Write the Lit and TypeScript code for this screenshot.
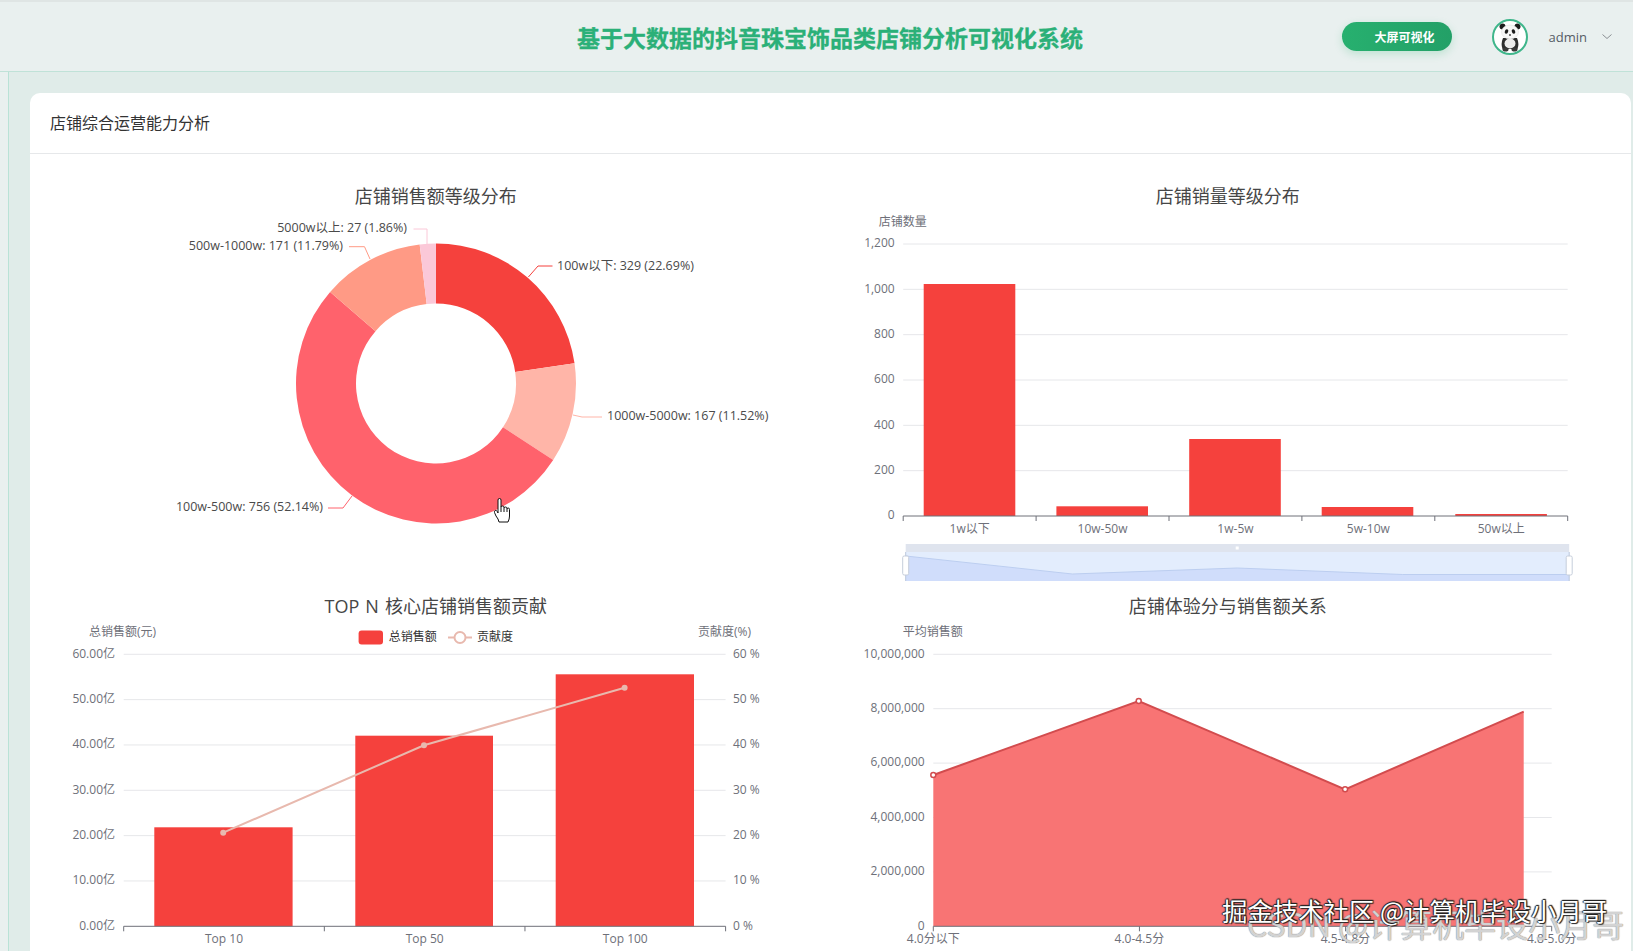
import { LitElement, css, html, svg } from "lit";
import { customElement } from "lit/decorators.js";

const RED = "#f5413d";

// 环形图: 顺时针从 12 点开始
const pieCx = 436;
const pieCy = 383.5;
const pieR = 140;
const pier = 80;
const pieData = [
  { pct: 22.69, color: "#f5413d", line: "528.4,277 538,266 552.5,266", text: "100w以下: 329 (22.69%)", x: 557, y: 266, anchor: "start" },
  { pct: 11.52, color: "#ffb5a8", line: "573,415 582,417 602,417", text: "1000w-5000w: 167 (11.52%)", x: 607, y: 416, anchor: "start" },
  { pct: 52.14, color: "#ff626c", line: "352,496 343,508 328,508", text: "100w-500w: 756 (52.14%)", x: 323, y: 507, anchor: "end" },
  { pct: 11.79, color: "#ff9a85", line: "370,259 364.5,246.7 349,246.7", text: "500w-1000w: 171 (11.79%)", x: 343, y: 246, anchor: "end" },
  { pct: 1.86, color: "#fbc8d8", line: "427,244 427,229 413.5,229", text: "5000w以上: 27 (1.86%)", x: 407, y: 228, anchor: "end" },
];

function arcPath(startPct: number, endPct: number) {
  const a0 = (startPct / 100) * Math.PI * 2;
  const a1 = (endPct / 100) * Math.PI * 2;
  const pt = (r: number, a: number) =>
    `${pieCx + r * Math.sin(a)} ${pieCy - r * Math.cos(a)}`;
  const large = endPct - startPct > 50 ? 1 : 0;
  return `M${pt(pieR, a0)}A${pieR} ${pieR} 0 ${large} 1 ${pt(pieR, a1)}L${pt(pier, a1)}A${pier} ${pier} 0 ${large} 0 ${pt(pier, a0)}Z`;
}

function pieChart() {
  let acc = 0;
  return pieData.map((d) => {
    const start = acc;
    acc += d.pct;
    return svg`
      <path d=${arcPath(start, acc)} fill=${d.color}></path>
      <polyline points=${d.line} fill="none" stroke=${d.color}></polyline>
      <text class="label" x=${d.x} y=${d.y} text-anchor=${d.anchor}>${d.text}</text>
    `;
  });
}

// 网格线和 y 轴文字
function yAxis(
  labels: string[],
  top: number,
  bottom: number,
  x0: number,
  x1: number,
  labelX: number
) {
  const step = (bottom - top) / (labels.length - 1);
  return labels.map((t, i) => {
    const y = bottom - i * step;
    return svg`
      ${i > 0 ? svg`<line class="grid" x1=${x0} x2=${x1} y1=${y} y2=${y}></line>` : ""}
      <text class="tick" x=${labelX} y=${y} text-anchor="end">${t}</text>
    `;
  });
}

function xAxis(labels: string[], x0: number, x1: number, y: number, band = true) {
  const n = band ? labels.length : labels.length - 1;
  const step = (x1 - x0) / n;
  const ticks = Array.from({ length: n + 1 }, (_, i) => x0 + i * step);
  return svg`
    <line class="axis" x1=${x0} x2=${x1} y1=${y} y2=${y}></line>
    ${ticks.map((t) => svg`<line class="axis" x1=${t} x2=${t} y1=${y} y2=${y + 5}></line>`)}
    ${labels.map(
      (t, i) => svg`<text class="tick" x=${band ? x0 + (i + 0.5) * step : x0 + i * step} y=${y + 13.5} text-anchor="middle">${t}</text>`
    )}
  `;
}

function bar(x: number, w: number, top: number, bottom: number) {
  return svg`<rect x=${x} y=${top} width=${w} height=${bottom - top} fill=${RED}></rect>`;
}

function levelBars() {
  const bars = [
    [924, 284],
    [1056.7, 506.3],
    [1189.5, 439],
    [1322, 507],
    [1455.6, 514],
  ];
  return svg`
    <text class="name" x="903" y="222" text-anchor="middle">店铺数量</text>
    ${yAxis(["0", "200", "400", "600", "800", "1,000", "1,200"], 244, 516, 903.5, 1568, 895)}
    ${bars.map(([x, top]) => bar(x, 91.6, top, 516))}
    ${xAxis(["1w以下", "10w-50w", "1w-5w", "5w-10w", "50w以上"], 903.5, 1568, 516)}
    <rect x="906" y="544" width="663.5" height="8" fill="#dfe4ee"></rect>
    <rect x="906" y="552" width="663.5" height="29" fill="#e3edfd"></rect>
    <path d="M906 556L1072.7 574L1237.5 568L1403 574.5L1569.5 574.5V581H906Z" fill="#d0ddfb" stroke="none"></path>
    <path d="M906 556L1072.7 574L1237.5 568L1403 574.5L1569.5 574.5" fill="none" stroke="#bccef0"></path>
    <line x1="906" x2="906" y1="552" y2="581" stroke="#bcc8dc"></line>
    <line x1="1569.5" x2="1569.5" y1="552" y2="581" stroke="#bcc8dc"></line>
    <rect x="1236" y="546.5" width="3" height="3" fill="#fff"></rect>
    <rect x="903" y="556" width="6" height="19" rx="1.5" fill="#fff" stroke="#c6cedb"></rect>
    <rect x="1566.5" y="556" width="6" height="19" rx="1.5" fill="#fff" stroke="#c6cedb"></rect>
  `;
}

function topNChart() {
  const lineColor = "#e8b9ae";
  const pts = [
    [223.2, 832.7],
    [424, 745.3],
    [624.6, 687.7],
  ];
  const right = ["0 %", "10 %", "20 %", "30 %", "40 %", "50 %", "60 %"];
  const step = 272 / 6;
  return svg`
    <text class="name" x="89" y="632">总销售额(元)</text>
    <text class="name" x="698" y="632">贡献度(%)</text>
    <rect x="358.6" y="630.5" width="24.4" height="14" rx="3" fill=${RED}></rect>
    <text class="legend" x="388.8" y="638">总销售额</text>
    <line x1="448" x2="472" y1="637.5" y2="637.5" stroke=${lineColor} stroke-width="2"></line>
    <circle cx="460" cy="637.5" r="5.5" fill="#fff" stroke=${lineColor} stroke-width="2"></circle>
    <text class="legend" x="477" y="638">贡献度</text>
    ${yAxis(["0.00亿", "10.00亿", "20.00亿", "30.00亿", "40.00亿", "50.00亿", "60.00亿"], 654.3, 926.3, 123.7, 725.6, 115)}
    ${right.map((t, i) => svg`<text class="tick" x="733" y=${926.3 - i * step}>${t}</text>`)}
    ${bar(154.3, 138.3, 827.3, 926.3)}
    ${bar(355.3, 137.7, 735.7, 926.3)}
    ${bar(555.7, 138.3, 674.3, 926.3)}
    ${xAxis(["Top 10", "Top 50", "Top 100"], 123.7, 725.6, 926.3)}
    <polyline points=${pts.map((p) => p.join(",")).join(" ")} fill="none" stroke=${lineColor} stroke-width="2"></polyline>
    ${pts.map(([x, y]) => svg`<circle cx=${x} cy=${y} r="3" fill=${lineColor}></circle>`)}
  `;
}

function scoreChart() {
  const pts = [
    [933.6, 775],
    [1139, 701],
    [1345.4, 789.3],
    [1524, 711.7],
  ];
  const d = pts.map((p, i) => `${i ? "L" : "M"}${p[0]} ${p[1]}`).join("");
  return svg`
    <text class="name" x="903" y="632">平均销售额</text>
    ${yAxis(["0", "2,000,000", "4,000,000", "6,000,000", "8,000,000", "10,000,000"], 654.3, 926.3, 933.6, 1552, 925)}
    <path d="${d}V926.3H933.6Z" fill="#f87474"></path>
    <path d=${d} fill="none" stroke="#d24c4e" stroke-width="2"></path>
    ${pts.slice(0, 3).map(([x, y]) => svg`<circle cx=${x} cy=${y} r="2.5" fill="#fff" stroke="#d24c4e" stroke-width="1.5"></circle>`)}
    ${xAxis(["4.0分以下", "4.0-4.5分", "4.5-4.8分", "4.8-5.0分"], 933.6, 1552, 926.3, false)}
  `;
}

const cursor = svg`
  <g transform="translate(494 498)" fill="#fff" stroke="#111" stroke-width="1" stroke-linejoin="round">
    <path d="M4 2Q4 .5 5.5 .5Q7 .5 7 2V9Q7 8 8.5 8Q10 8 10 9.5V10Q10 9 11.5 9Q13 9 13 10.5V11Q13 10 14.2 10Q15.5 10 15.5 11.5V18Q15.5 21 14 24H5Q4.5 21 2 18L.5 14.5Q0 13 1.2 12.5Q2.5 12 3.2 13.5L4 15Z"></path>
    <path d="M7 9V14M10 10V14M13 11V14" fill="none"></path>
  </g>
`;

const panda = svg`
  <svg viewBox="2 2 32 32" width="32" height="32">
    <circle cx="10.5" cy="7.5" r="3" fill="#1c1c1c"></circle>
    <circle cx="25.5" cy="7.5" r="3" fill="#1c1c1c"></circle>
    <path d="M11 19Q8.500 25 10.500 30H25.500Q27.500 25 25 19Z" fill="#2e2e2e"></path>
    <ellipse cx="18" cy="24.5" rx="5.500" ry="5" fill="#ececec"></ellipse>
    <ellipse cx="18" cy="13" rx="8.500" ry="7" fill="#f7f7f7" stroke="#ddd" stroke-width=".5"></ellipse>
    <ellipse cx="14.500" cy="12.500" rx="1.700" ry="2.300" fill="#1c1c1c" transform="rotate(20 14.500 12.500)"></ellipse>
    <ellipse cx="21.500" cy="12.500" rx="1.700" ry="2.300" fill="#1c1c1c" transform="rotate(-20 21.500 12.500)"></ellipse>
    <ellipse cx="18" cy="16" rx="1.200" ry=".8" fill="#222"></ellipse>
    <ellipse cx="13.500" cy="30.500" rx="3" ry="2" fill="#3a3a3a"></ellipse>
    <ellipse cx="22.500" cy="30.500" rx="3" ry="2" fill="#3a3a3a"></ellipse>
  </svg>
`;

@customElement("app-root")
export class AppRoot extends LitElement {
  render() {
    return html`
      <header class="topbar">
        <div></div>
        <h1 class="title">基于大数据的抖音珠宝饰品类店铺分析可视化系统</h1>
        <div class="user">
          <button class="screen-btn">大屏可视化</button>
          <div class="avatar">${panda}</div>
          <span class="uname">admin</span>
          <svg class="chev" viewBox="0 0 10 5" width="10" height="5">
            <path d="M.5 .5L5 4.500L9.500 .5" fill="none" stroke="#8a8f93"></path>
          </svg>
        </div>
      </header>
      <div class="body">
        <aside class="side"></aside>
        <main class="content">
          <section class="card">
            <div class="card-head">店铺综合运营能力分析</div>
            <div class="charts">
              <div class="chart left">
                <div class="chart-title">店铺销售额等级分布</div>
                <svg class="row1" viewBox="30 208 800.5 386">${pieChart()}${cursor}</svg>
              </div>
              <div class="chart right">
                <div class="chart-title">店铺销量等级分布</div>
                <svg class="row1" viewBox="831.3 208 800.5 386">${levelBars()}</svg>
              </div>
              <div class="chart left">
                <div class="chart-title">TOP N 核心店铺销售额贡献</div>
                <svg class="row2" viewBox="30 618 800.5 333">${topNChart()}</svg>
              </div>
              <div class="chart right">
                <div class="chart-title">店铺体验分与销售额关系</div>
                <svg class="row2" viewBox="831.3 618 800.5 333">${scoreChart()}</svg>
              </div>
            </div>
          </section>
        </main>
      </div>
      <div class="mark-csdn">CSDN @计算机毕设小月哥</div>
      <div class="mark-juejin">掘金技术社区 @计算机毕设小月哥</div>
    `;
  }

  static styles = css`
    :host {
      display: block;
      position: relative;
      width: 1633px;
      height: 951px;
      overflow: hidden;
      background: #e0ece9;
      font-family: "Open Sans", "Noto Sans CJK SC", sans-serif;
      color: #333;
    }
    .topbar {
      box-sizing: border-box;
      height: 72px;
      display: grid;
      grid-template-columns: 1fr auto 1fr;
      align-items: center;
      padding: 0 21px 0 48px;
      background: #e9f0ef;
      border-top: 2px solid #dfe5e4;
      border-bottom: 1px solid #c0e2d8;
    }
    .title {
      margin: 0;
      font-family: "Noto Sans CJK SC", sans-serif;
      font-size: 23px;
      font-weight: 700;
      line-height: 30px;
      color: #2bb078;
      -webkit-text-stroke: 0.3px #2bb078;
      white-space: nowrap;
    }
    .user {
      justify-self: end;
      display: flex;
      align-items: center;
    }
    .screen-btn {
      box-sizing: border-box;
      width: 110px;
      height: 29px;
      padding: 0 17px 0 0;
      border: none;
      border-radius: 15px;
      background: linear-gradient(90deg, #27b06f, #23a067);
      box-shadow: 0 3px 8px rgba(39, 176, 111, 0.22);
      color: #fff;
      font-family: "Noto Sans CJK SC", sans-serif;
      font-size: 12px;
      font-weight: 700;
      text-align: right;
    }
    .avatar {
      box-sizing: border-box;
      width: 36px;
      height: 36px;
      margin-left: 40px;
      border: 2px solid #3fb68b;
      border-radius: 50%;
      background: #fff;
      overflow: hidden;
    }
    .avatar svg {
      display: block;
    }
    .uname {
      margin-left: 21px;
      font-size: 13px;
      color: #555c66;
    }
    .chev {
      margin-left: 15px;
    }
    .body {
      display: flex;
      height: 879px;
    }
    .side {
      flex: none;
      width: 8px;
      background: #e9f0ef;
      border-right: 1px solid #b9e2d6;
    }
    .content {
      flex: 1;
      min-width: 0;
      padding: 21px 2px 0 21px;
    }
    .card {
      background: #fff;
      border-radius: 10px 10px 0 0;
      height: 100%;
    }
    .card-head {
      box-sizing: border-box;
      height: 61px;
      padding-left: 20px;
      line-height: 61px;
      font-size: 16px;
      color: #333;
      border-bottom: 1px solid #e6e8ea;
    }
    .charts {
      display: grid;
      grid-template-columns: 1fr 1fr;
      padding-top: 30px;
    }
    .chart-title {
      height: 24px;
      line-height: 24px;
      font-size: 18px;
      word-spacing: 1.4px;
      text-align: center;
      color: #464646;
    }
    .left .chart-title {
      padding-left: 11px;
    }
    .right .chart-title {
      padding-right: 6px;
    }
    .chart svg {
      display: block;
      width: 100%;
    }
    svg.row1 {
      height: 386px;
    }
    svg.row2 {
      height: 333px;
    }
    text {
      font-size: 12px;
      dominant-baseline: central;
      fill: #6e7079;
      transform: translateY(-1.2px);
    }
    text.label {
      font-size: 12.5px;
      fill: #4a4a4a;
      transform: translateY(-0.3px);
    }
    text.name {
      transform: translateY(-0.3px);
    }
    text.legend {
      fill: #333;
    }
    .grid {
      stroke: #e6e7ea;
    }
    .axis {
      stroke: #6e7079;
    }
    .mark-juejin,
    .mark-csdn {
      position: absolute;
      font-family: "Noto Sans CJK SC", sans-serif;
      white-space: nowrap;
    }
    .mark-csdn {
      left: 1247px;
      top: 901px;
      font-size: 32px;
      line-height: 44px;
      color: rgba(255, 255, 255, 0.65);
      text-shadow: 0 0 1px #8a8a8a, 0 0 1px #8a8a8a;
    }
    .mark-juejin {
      left: 1222px;
      top: 892px;
      font-size: 25.4px;
      line-height: 36px;
      color: #fff;
      text-shadow: 1px 1px 1px #222, -1px 0 1px #222, 0 -1px 1px #222, 1px -1px 1px #222;
    }
  `;
}
